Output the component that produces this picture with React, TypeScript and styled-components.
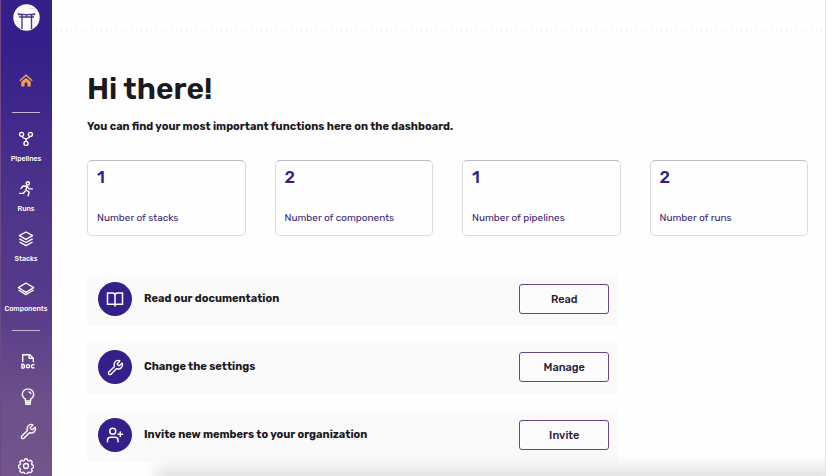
import React from "react";
import styled, { createGlobalStyle } from "styled-components";
import { Wrench, UserPlus } from "lucide-react";

const GlobalStyle = createGlobalStyle`
  *, *::before, *::after { box-sizing: border-box; }
  body {
    margin: 0;
    background: #fefefe;
    color: #1c1a1f;
    font-family: Rubik, Roboto, "Liberation Sans", sans-serif;
  }
  h1, p, ul { margin: 0; padding: 0; }
  ul { list-style: none; }
`;

const Shell = styled.div`
  display: flex;
  height: 100vh;
  overflow: hidden;
  border-right: 1px solid #e4e4e6;
`;

const Sidebar = styled.nav`
  flex: 0 0 52px;
  display: flex;
  flex-direction: column;
  align-items: center;
  padding-top: 4px;
  overflow: hidden;
  background: linear-gradient(180deg, #35208a 0%, #35208a 10%, #51378a 48%, #55398a 62%, #6d4f8a 84%, #73558c 100%);
  box-shadow: inset 1px 0 #6d4a86;
`;

const LogoLink = styled.a`
  display: flex;
  flex: none;
  height: 27px;
  margin-bottom: 35px;
`;

const NavLink = styled.a<{ $active?: boolean }>`
  display: flex;
  flex: none;
  flex-direction: column;
  align-items: center;
  gap: 7px;
  height: ${(p) => (p.$active ? 46 : 50)}px;
  padding-top: 8px;
  color: ${(p) => (p.$active ? "#f4a04a" : "#ffffff")};
  font-size: 7px;
  font-weight: 500;
  line-height: 10px;
  text-decoration: none;
  svg { flex: none; display: block; }
`;

const NavList = styled.div`
  display: flex;
  flex: none;
  flex-direction: column;
  padding: 10px 0 7px;
`;

const ToolList = styled.div`
  display: flex;
  flex: none;
  flex-direction: column;
  align-items: center;
  padding-top: 22px;
`;

const ToolLink = styled.a<{ $shifted?: boolean }>`
  display: flex;
  height: 35px;
  padding-left: ${(p) => (p.$shifted ? 4 : 0)}px;
  color: #ffffff;
  svg { flex: none; display: block; }
`;

const Divider = styled.hr`
  flex: none;
  width: 28px;
  height: 1px;
  margin: 0;
  border: 0;
  background: #c3b9cf;
`;

const Page = styled.div`
  flex: 1;
  min-width: 0;
`;

const TopBar = styled.header`
  height: 31px;
  background: repeating-linear-gradient(90deg, transparent 0 4px, #e2e2e4 4px 5px) left bottom / 100% 1px no-repeat;
`;

const Main = styled.main`
  padding: 38px 17px 0 35px;
`;

const Title = styled.h1`
  font-size: 30px;
  font-weight: 600;
  line-height: 40px;
`;

const Intro = styled.p`
  margin-top: 9px;
  font-size: 11px;
  font-weight: 700;
  line-height: 18px;
`;

const StatGrid = styled.ul`
  display: grid;
  grid-template-columns: repeat(4, 1fr);
  gap: 29px;
  margin-top: 24px;
`;

const StatCard = styled.li`
  height: 76px;
  padding: 5px 9px 7px;
  display: flex;
  flex-direction: column;
  justify-content: space-between;
  border: 1px solid #dcdbe0;
  border-top-color: #bdbbc4;
  border-radius: 5px;
  color: #3a2672;
`;

const StatValue = styled.strong`
  color: #35208a;
  font-size: 17px;
  font-weight: 500;
  line-height: 22px;
`;

const StatLabel = styled.span`
  font-size: 10px;
  line-height: 20px;
`;

const Lower = styled.div`
  display: grid;
  grid-template-columns: 14fr 5fr;
  margin-top: 39px;
`;

const ActionList = styled.ul`
  display: grid;
  gap: 17px;
`;

const ActionRow = styled.li`
  display: flex;
  align-items: flex-start;
  height: 51px;
  padding: 7px 9px 0 11px;
  background: #fafafb;
`;

const RoundIcon = styled.span`
  display: grid;
  place-items: center;
  width: 34px;
  height: 34px;
  border-radius: 50%;
  background: #35208a;
  color: #ffffff;
`;

const ActionLabel = styled.span`
  flex: 1;
  margin-left: 12px;
  font-size: 11px;
  font-weight: 700;
  line-height: 34px;
`;

const ActionButton = styled.button`
  width: 90px;
  height: 30px;
  margin-top: 2px;
  padding: 0;
  border: 1px solid #684884;
  border-radius: 3px;
  background: #fcfcfd;
  color: #28203a;
  font: inherit;
  font-size: 11px;
  font-weight: 500;
`;

const BottomShade = styled.div`
  position: fixed;
  left: 165px;
  right: 0;
  bottom: -14px;
  height: 14px;
  box-shadow: 0 0 16px 8px #dfdfe3;
  pointer-events: none;
`;

const Logo = () => (
  <svg width="27" height="27" viewBox="0 0 27 27" aria-hidden="true">
    <circle cx="13.5" cy="13.5" r="13.2" fill="#fff" />
    <path d="M16 4.5h7M3 8h4M20 7h4M2 17h4M21 18h4M4 20h3" stroke="#d9d5e4" strokeWidth=".8" />
    <path d="M4.5 9.3Q13.5 10.8 22.5 9.3L22 11.2H5z" fill="#4a3686" />
    <path d="M6 13h15M13.5 10.5V13M9 11v14M18.5 11v14" stroke="#4a3686" strokeWidth="1.4" fill="none" />
  </svg>
);

const HomeIcon = () => (
  <svg width="14" height="13" viewBox="0 0 14 13" aria-hidden="true">
    <path d="M.8 6.8 7 1.3l6.2 5.5" fill="none" stroke="currentColor" strokeWidth="1.5" />
    <path d="M2.3 7.8 7 3.9l4.7 3.9v4.6H8.5V9.7a1.5 1.5 0 0 0-3 0v2.7H2.3z" fill="currentColor" />
  </svg>
);

const PipelinesIcon = () => (
  <svg width="16" height="16" viewBox="0 0 16 16" fill="none" stroke="currentColor" strokeWidth="1.4" aria-hidden="true">
    <circle cx="3.6" cy="3.4" r="2" />
    <circle cx="12.4" cy="3.4" r="2" />
    <circle cx="8" cy="12.4" r="2" />
    <path d="M4.1 5.4C4.8 7.5 7 7.2 8 8.2c1-1 3.2-.7 3.9-2.8M8 8v2.4" />
  </svg>
);

const RunIcon = () => (
  <svg width="16" height="16" viewBox="0 0 16 16" fill="none" stroke="currentColor" strokeWidth="1.4" strokeLinecap="round" strokeLinejoin="round" aria-hidden="true">
    <circle cx="9.8" cy="2.4" r="1.6" />
    <path d="M3 7.4 5 5l4.2.3L7.7 9l3.4 2-.9 3.8M9.2 5.3l1.9 2.6h3.2M7 10.2l-1.7 2.2H1.8" />
  </svg>
);

const StacksIcon = () => (
  <svg width="16" height="16" viewBox="0 0 16 16" fill="none" stroke="currentColor" strokeWidth="1.4" strokeLinejoin="round" aria-hidden="true">
    <path d="m8 1 6.6 3.7L8 8.4 1.4 4.7zM1.4 7.8 8 11.5l6.6-3.7M1.4 11 8 14.7l6.6-3.7" />
  </svg>
);

const ComponentsIcon = () => (
  <svg width="18" height="16" viewBox="0 0 18 16" fill="none" stroke="currentColor" strokeWidth="1.4" strokeLinejoin="round" aria-hidden="true">
    <path d="m9 2 7.6 4.7L9 11.4 1.4 6.7zM1.4 9 9 13.6 16.6 9" />
  </svg>
);

const DocIcon = () => (
  <svg width="16" height="17" viewBox="0 0 16 17" fill="none" stroke="currentColor" strokeWidth="1.4" aria-hidden="true">
    <path d="M2.7 9V1.7h7l3.6 3.5V9M9.2 1.7v3.7h4" />
    <path d="M2 11.3v3.8h.6a1.9 1.9 0 0 0 0-3.8z" />
    <circle cx="8" cy="13.2" r="1.6" />
    <path d="M14.4 12a1.7 1.7 0 1 0 0 2.4" />
  </svg>
);

const BulbIcon = () => (
  <svg width="16" height="18" viewBox="0 0 16 18" fill="none" stroke="currentColor" strokeWidth="1.4" aria-hidden="true">
    <path d="M5.4 13v-1.8C3.5 10 2.3 8.6 2.3 6.6a5.7 5.7 0 0 1 11.4 0c0 2-1.2 3.4-3.1 4.6V13zM8.5 3.7a2.7 2.7 0 0 1 2.4 2.4M5 14.8h6M5.2 16.4h5.6" />
  </svg>
);

const GearIcon = () => (
  <svg width="16" height="16" viewBox="0 0 24 24" fill="none" stroke="currentColor" strokeWidth="2" strokeLinejoin="round" aria-hidden="true">
    <circle cx="12" cy="12" r="3.7" />
    <path d="M10.2 1.5h3.6l.8 2.3 1.700.7 2.500-1.100 2.600 2.600-1.100 2.500.7 1.700 2.300.8v3.600l-2.300.8-.7 1.700 1.100 2.500-2.600 2.600-2.500-1.100-1.700.7-.8 2.300h-3.600l-.8-2.300-1.700-.7-2.500 1.100-2.600-2.600 1.100-2.500-.7-1.700-2.300-.8v-3.600l2.300-.8.7-1.700-1.100-2.500 2.600-2.600 2.500 1.100 1.700-.7z" />
  </svg>
);

const BookIcon = () => (
  <svg width="18" height="18" viewBox="0 0 24 24" fill="none" stroke="currentColor" strokeWidth="2" aria-hidden="true">
    <path d="M12 22v-1.5c0-1-.8-1.5-1.8-1.5H2V4h7a3 3 0 0 1 3 3v14.5V7a3 3 0 0 1 3-3h7v15h-8.2c-1 0-1.8.5-1.8 1.5z" />
  </svg>
);

const navItems = [
  { label: "Pipelines", Icon: PipelinesIcon },
  { label: "Runs", Icon: RunIcon },
  { label: "Stacks", Icon: StacksIcon },
  { label: "Components", Icon: ComponentsIcon },
];

const stats = [
  { value: 1, label: "Number of stacks" },
  { value: 2, label: "Number of components" },
  { value: 1, label: "Number of pipelines" },
  { value: 2, label: "Number of runs" },
];

const actions = [
  { label: "Read our documentation", button: "Read", icon: <BookIcon /> },
  { label: "Change the settings", button: "Manage", icon: <Wrench size={17} /> },
  { label: "Invite new members to your organization", button: "Invite", icon: <UserPlus size={18} /> },
];

export default function App() {
  return (
    <>
      <GlobalStyle />
      <Shell>
        <Sidebar aria-label="Main">
          <LogoLink href="#" aria-label="Start"><Logo /></LogoLink>
          <NavLink href="#" $active aria-label="Home"><HomeIcon /></NavLink>
          <Divider />
          <NavList>
            {navItems.map(({ label, Icon }) => (
              <NavLink href="#" key={label}><Icon />{label}</NavLink>
            ))}
          </NavList>
          <Divider />
          <ToolList>
            <ToolLink href="#" $shifted aria-label="Documentation"><DocIcon /></ToolLink>
            <ToolLink href="#" $shifted aria-label="Examples"><BulbIcon /></ToolLink>
            <ToolLink href="#" $shifted aria-label="Report issue"><Wrench size={17} /></ToolLink>
            <ToolLink href="#" aria-label="Settings"><GearIcon /></ToolLink>
          </ToolList>
        </Sidebar>
        <Page>
          <TopBar />
          <Main>
            <Title>Hi there!</Title>
            <Intro>You can find your most important functions here on the dashboard.</Intro>
            <StatGrid>
              {stats.map((s) => (
                <StatCard key={s.label}>
                  <StatValue>{s.value}</StatValue>
                  <StatLabel>{s.label}</StatLabel>
                </StatCard>
              ))}
            </StatGrid>
            <Lower>
              <ActionList>
                {actions.map(({ label, button, icon }) => (
                  <ActionRow key={label}>
                    <RoundIcon>{icon}</RoundIcon>
                    <ActionLabel>{label}</ActionLabel>
                    <ActionButton type="button" aria-label={`${button}: ${label}`}>{button}</ActionButton>
                  </ActionRow>
                ))}
              </ActionList>
            </Lower>
          </Main>
        </Page>
      </Shell>
      <BottomShade />
    </>
  );
}
